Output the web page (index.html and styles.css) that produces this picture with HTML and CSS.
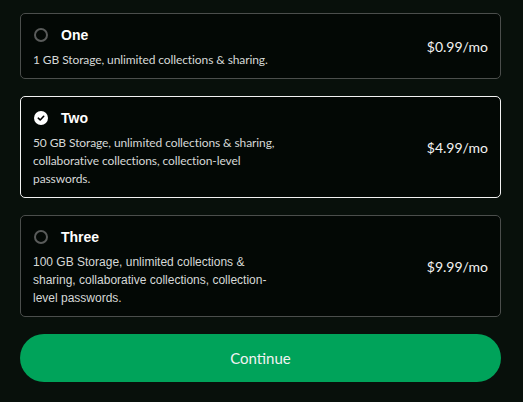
FILE: index.html
```html
<!DOCTYPE html>
<html lang="en">
<head>
    <meta charset="UTF-8">
    <title>Choose a plan</title>
    <link rel="stylesheet" href="styles.css">
</head>
<body>
    <div class="plans">
        <label class="plan">
            <div class="plan-info">
                <div class="plan-head">
                    <span class="radio"></span>
                    <span class="plan-name">One</span>
                </div>
                <p class="plan-desc">1 GB Storage, unlimited collections &amp; sharing.</p>
            </div>
            <div class="plan-price">$0.99/mo</div>
        </label>

        <label class="plan selected">
            <div class="plan-info">
                <div class="plan-head">
                    <span class="radio">
                        <svg viewBox="0 0 14 14" width="14" height="14">
                            <circle cx="7" cy="7" r="7" fill="#fff"/>
                            <path d="M4.3 7.2 L6.2 9 L9.7 5.3" fill="none" stroke="#000" stroke-width="1.6" stroke-linecap="round" stroke-linejoin="round"/>
                        </svg>
                    </span>
                    <span class="plan-name">Two</span>
                </div>
                <p class="plan-desc">50 GB Storage, unlimited collections &amp; sharing, collaborative collections, collection-level passwords.</p>
            </div>
            <div class="plan-price">$4.99/mo</div>
        </label>

        <label class="plan">
            <div class="plan-info">
                <div class="plan-head">
                    <span class="radio"></span>
                    <span class="plan-name">Three</span>
                </div>
                <p class="plan-desc plain">100 GB Storage, unlimited collections &amp; sharing, collaborative collections, collection-level passwords.</p>
            </div>
            <div class="plan-price">$9.99/mo</div>
        </label>

        <button class="continue">Continue</button>
    </div>
</body>
</html>
```

FILE: styles.css
```css
body {
    margin: 0;
    background: #08100b;
    font-family: "Lato", "Liberation Sans", sans-serif;
    color: #fff;
}
.plans {
    width: 481px;
    margin-left: 20px;
    padding-top: 13px;
    display: flex;
    flex-direction: column;
    gap: 17px;
}
.plan {
    display: flex;
    align-items: center;
    justify-content: space-between;
    background: #030805;
    border: 1px solid #4b4e4c;
    border-radius: 5px;
    padding: 10px 12px 9px 12px;
    cursor: pointer;
}
.plan.selected {
    border-color: #f2f2f2;
}
.plan-head {
    display: flex;
    align-items: center;
    height: 21px;
}
.radio {
    width: 14px;
    height: 14px;
    border: 2px solid #595b5a;
    border-radius: 50%;
    margin-left: 1px;
    box-sizing: border-box;
    display: flex;
}
.selected .radio {
    border: none;
}
.plan-name {
    margin-left: 13px;
    font-family: "Liberation Sans", sans-serif;
    font-weight: bold;
    font-size: 14px;
}
.plan-desc {
    margin: 6px 0 0;
    width: 252px;
    font-size: 12px;
    letter-spacing: -0.1px;
    line-height: 18px;
    color: #d6d8d7;
}
.plan-desc.plain {
    font-family: "Liberation Sans", sans-serif;
    letter-spacing: 0;
}
.plan-price {
    font-size: 14px;
    color: #f4f4f4;
}
.continue {
    height: 48px;
    border: none;
    border-radius: 24px;
    background: #00a35a;
    color: #f2f2f2;
    font-family: "Lato", sans-serif;
    font-size: 15px;
    cursor: pointer;
}
```
